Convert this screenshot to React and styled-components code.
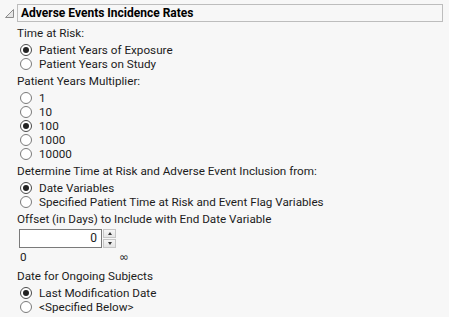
import React, { useState } from 'react'
import styled, { createGlobalStyle } from 'styled-components'

const GlobalStyle = createGlobalStyle`
    html, body {
        margin: 0;
        padding: 0;
        background: #f7f7f7;
    }
    body {
        font-family: Roboto, 'Liberation Sans', sans-serif;
        font-size: 11.7px;
        color: #1c1c1c;
    }
`

const Panel = styled.div`
    width: 449px;
    height: 317px;
    padding: 4px 6px 0 5px;
    box-sizing: border-box;
    overflow: hidden;
`

const Header = styled.div`
    display: flex;
    align-items: flex-start;
    gap: 3px;
`

const Disclosure = styled.svg`
    width: 9px;
    height: 9px;
    flex: none;
    margin-top: 5px;
`

const TitleBox = styled.div`
    flex: 1;
    height: 18px;
    box-sizing: border-box;
    border: 1px solid #bdbdbd;
    padding: 0 3px;
    font-weight: bold;
    font-size: 12px;
    line-height: 16px;
    color: #000;
`

const Body = styled.div`
    padding-left: 12px;
    display: flex;
    flex-direction: column;
`

const Label = styled.div`
    height: 14px;
    line-height: 14px;
    margin-top: ${p => p.$gap ?? 3}px;
`

const Group = styled.div`
    display: flex;
    flex-direction: column;
    margin-top: 3px;
`

const RadioRow = styled.label`
    display: flex;
    align-items: center;
    gap: 7px;
    height: 14px;
    line-height: 14px;
    padding-left: 3px;
    cursor: default;
`

const Circle = styled.span`
    width: 12px;
    height: 12px;
    border-radius: 50%;
    border: 1px solid ${p => (p.$on ? '#4a4a4a' : '#7a7a7a')};
    background: #fff;
    box-sizing: border-box;
    display: flex;
    align-items: center;
    justify-content: center;
    flex: none;
    &::after {
        content: '';
        width: 6px;
        height: 6px;
        border-radius: 50%;
        background: #222;
        display: ${p => (p.$on ? 'block' : 'none')};
    }
`

const SpinRow = styled.div`
    display: flex;
    gap: 1px;
    margin: 3px 0 0 2px;
`

const NumBox = styled.div`
    width: 83px;
    height: 19px;
    box-sizing: border-box;
    border: 1px solid #7a7a7a;
    background: #fff;
    text-align: right;
    padding-right: 4px;
    line-height: 17px;
    font-size: 12px;
`

const Spinner = styled.div`
    display: flex;
    flex-direction: column;
    gap: 1px;
    width: 13px;
`

const SpinBtn = styled.div`
    height: 9px;
    border: 1px solid #c6c6c6;
    box-sizing: border-box;
    background: linear-gradient(#f6f6f6, #e4e4e4);
    display: flex;
    align-items: center;
    justify-content: center;
    &::after {
        content: '';
        border-left: 2.5px solid transparent;
        border-right: 2.5px solid transparent;
        ${p => (p.$up ? 'border-bottom' : 'border-top')}: 3px solid #333;
    }
`

const RangeRow = styled.div`
    display: grid;
    grid-template-columns: 99px auto;
    align-items: center;
    height: 14px;
    line-height: 14px;
    margin: 2px 0 0 3px;
`

const Infinity = styled.span`
    font-family: 'DejaVu Sans', sans-serif;
    font-size: 11.5px;
`

const Radio = ({ on, children }) => (
    <RadioRow>
        <Circle $on={on} />
        <span>{children}</span>
    </RadioRow>
)

const RadioGroup = ({ options, value }) => (
    <Group>
        {options.map(o => (
            <Radio key={o} on={o === value}>{o}</Radio>
        ))}
    </Group>
)

export default function App() {
    const [offset] = useState(0)

    return (
        <Panel>
            <GlobalStyle />
            <Header>
                <Disclosure viewBox='0 0 9 9'>
                    <path d='M8.5 0.5 L8.5 8.5 L0.5 8.5 Z' fill='#e6e6e6' stroke='#8c8c8c' strokeWidth='1' />
                </Disclosure>
                <TitleBox>Adverse Events Incidence Rates</TitleBox>
            </Header>
            <Body>
                <Label $gap={4}>Time at Risk:</Label>
                <RadioGroup
                    options={['Patient Years of Exposure', 'Patient Years on Study']}
                    value='Patient Years of Exposure'
                />
                <Label>Patient Years Multiplier:</Label>
                <RadioGroup options={['1', '10', '100', '1000', '10000']} value='100' />
                <Label>Determine Time at Risk and Adverse Event Inclusion from:</Label>
                <RadioGroup
                    options={['Date Variables', 'Specified Patient Time at Risk and Event Flag Variables']}
                    value='Date Variables'
                />
                <Label>Offset (in Days) to Include with End Date Variable</Label>
                <SpinRow>
                    <NumBox>{offset}</NumBox>
                    <Spinner>
                        <SpinBtn $up />
                        <SpinBtn />
                    </Spinner>
                </SpinRow>
                <RangeRow>
                    <span>0</span>
                    <Infinity>∞</Infinity>
                </RangeRow>
                <Label $gap={5}>Date for Ongoing Subjects</Label>
                <RadioGroup
                    options={['Last Modification Date', '<Specified Below>']}
                    value='Last Modification Date'
                />
            </Body>
        </Panel>
    )
}
